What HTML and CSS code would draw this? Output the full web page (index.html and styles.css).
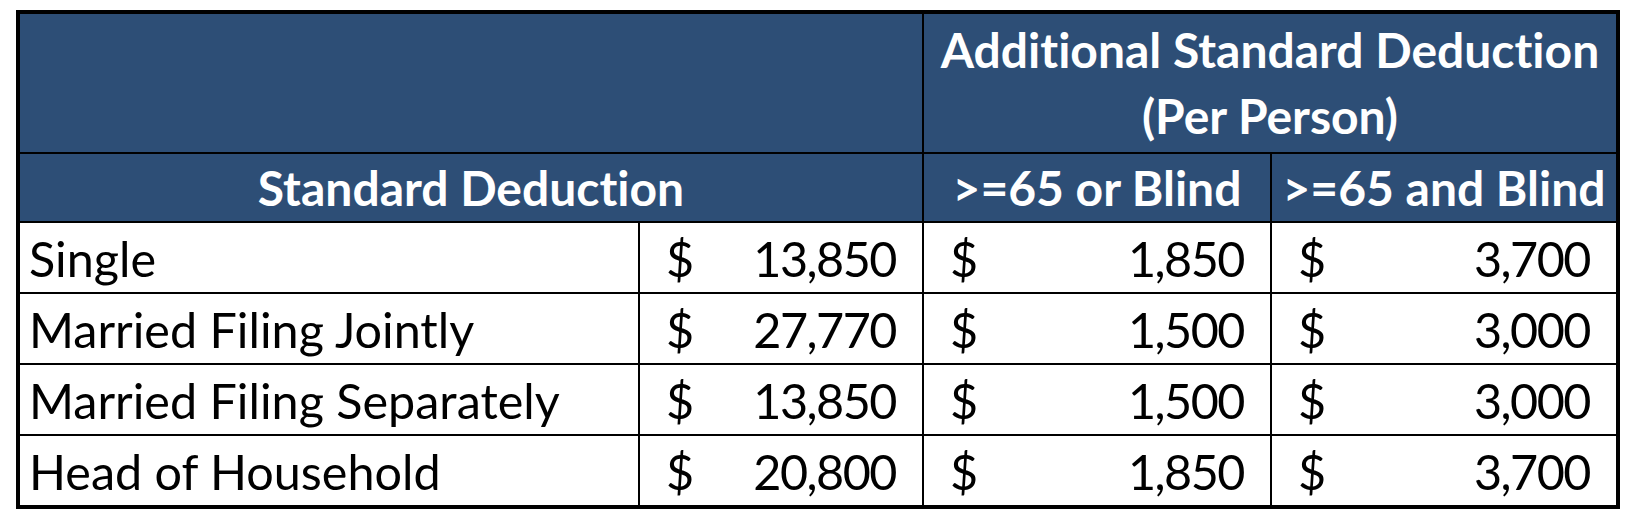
FILE: index.html
```html
<!DOCTYPE html>
<html lang="en">
<head>
<meta charset="utf-8">
<title>Standard Deduction</title>
<link rel="stylesheet" href="styles.css">
</head>
<body>
<div class="sheet">
  <div class="cell head span2"></div>
  <div class="cell head span2 title">Additional Standard Deduction<br>(Per Person)</div>
  <div class="cell head span2">Standard Deduction</div>
  <div class="cell head">&gt;=65 or Blind</div>
  <div class="cell head">&gt;=65 and Blind</div>

  <div class="cell label">Single</div>
  <div class="cell money"><span>$</span><span class="amount">13,850</span></div>
  <div class="cell money"><span>$</span><span class="amount">1,850</span></div>
  <div class="cell money"><span>$</span><span class="amount">3,700</span></div>

  <div class="cell label">Married Filing Jointly</div>
  <div class="cell money"><span>$</span><span class="amount">27,770</span></div>
  <div class="cell money"><span>$</span><span class="amount">1,500</span></div>
  <div class="cell money"><span>$</span><span class="amount">3,000</span></div>

  <div class="cell label">Married Filing Separately</div>
  <div class="cell money"><span>$</span><span class="amount">13,850</span></div>
  <div class="cell money"><span>$</span><span class="amount">1,500</span></div>
  <div class="cell money"><span>$</span><span class="amount">3,000</span></div>

  <div class="cell label">Head of Household</div>
  <div class="cell money"><span>$</span><span class="amount">20,800</span></div>
  <div class="cell money"><span>$</span><span class="amount">1,850</span></div>
  <div class="cell money"><span>$</span><span class="amount">3,700</span></div>
</div>
</body>
</html>
```
FILE: styles.css
```css
body {
  margin: 0;
  padding: 10px 0 0 16px;
  background: #ffffff;
}

.sheet {
  display: inline-grid;
  grid-template-columns: 618px 282px 346px 344px;
  grid-template-rows: 138px 67px repeat(4, 69px);
  gap: 2px;
  padding: 4px;
  background: #000000;
}

.cell {
  display: flex;
  align-items: center;
  background: #ffffff;
  color: #000000;
  font-family: Lato, "Open Sans", sans-serif;
  font-size: 48.5px;
  font-variant-ligatures: none;
  white-space: nowrap;
}

.head {
  justify-content: center;
  text-align: center;
  background: #2d4e76;
  color: #ffffff;
  font-weight: 700;
  font-size: 48px;
}

.span2 {
  grid-column: span 2;
}

.title {
  line-height: 66px;
}

.label {
  padding-left: 9px;
}

.money {
  justify-content: space-between;
  padding: 0 26px;
}

.amount {
  letter-spacing: -1.5px;
}
```
